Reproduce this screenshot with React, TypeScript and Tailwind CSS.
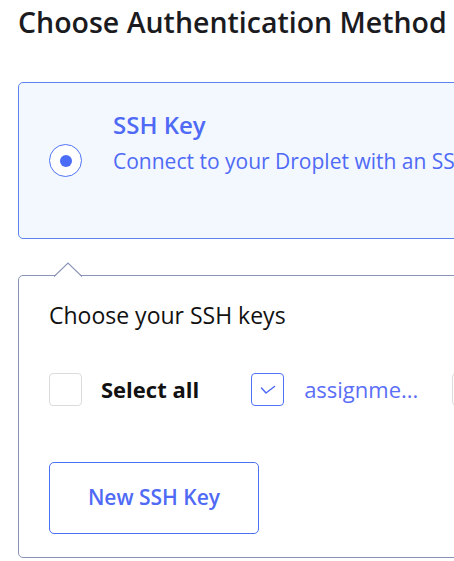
const App = () => {
  return (
    <div className="w-[454px] h-[561px] overflow-hidden bg-white pl-[18px] font-['Open_Sans',sans-serif]">
      <h1 className="pt-[6px] text-[28.5px] leading-[32px] font-semibold text-[#1b1b1f] whitespace-nowrap">
        Choose Authentication Method
      </h1>

      <div className="mt-[44px] w-[600px] h-[157px] rounded-[5px] border border-[#5b83ef] bg-[#f3f8ff] flex items-start pl-[30px] pt-[28px]">
        <div className="mt-[33px] w-[33px] h-[33px] rounded-full border border-[#4f73f5] bg-white flex items-center justify-center">
          <div className="w-[12px] h-[12px] rounded-full bg-[#4a6cf7]" />
        </div>
        <div className="ml-[31px] flex flex-col text-[#4f6af5] whitespace-nowrap">
          <span className="text-[24px] leading-[28px] font-semibold">SSH Key</span>
          <span className="mt-[9px] text-[21px] leading-[26px]">
            Connect to your Droplet with an SSH key pair
          </span>
        </div>
      </div>

      <div className="relative mt-[36px] w-[600px] h-[283px] rounded-[5px] border border-[#8a93b5] bg-white pl-[30px]">
        <svg
          className="absolute -top-[14px] left-[35px]"
          width="28"
          height="15"
          viewBox="0 0 28 15"
        >
          <polygon points="0,15 14,1 28,15" fill="white" />
          <polyline
            points="0,14.5 14,1 28,14.5"
            fill="none"
            stroke="#8a93b5"
            strokeWidth="1.2"
          />
        </svg>

        <p className="pt-[25px] text-[23px] leading-[28px] text-[#111]">Choose your SSH keys</p>

        <div className="mt-[44px] flex items-center whitespace-nowrap">
          <div className="w-[33px] h-[33px] rounded-[4px] border border-[#dcdcdc] bg-white" />
          <span className="ml-[19px] text-[22px] leading-[33px] font-bold text-[#111]">Select all</span>
          <div className="ml-[52px] w-[33px] h-[33px] rounded-[4px] border border-[#4f73f5] bg-white flex items-center justify-center">
            <svg width="16" height="10" viewBox="0 0 16 10">
              <polyline
                points="1.5,3 6,8 14.5,1.5"
                fill="none"
                stroke="#4f6af5"
                strokeWidth="1.5"
                strokeLinecap="round"
                strokeLinejoin="round"
              />
            </svg>
          </div>
          <span className="ml-[20px] text-[22px] leading-[33px] text-[#5b6ef7]">assignme...</span>
          <div className="ml-[34px] w-[33px] h-[33px] rounded-[4px] border border-[#dcdcdc] bg-white" />
        </div>

        <button className="mt-[56px] w-[210px] h-[72px] rounded-[5px] border border-[#4a72f2] bg-white text-[21px] font-semibold text-[#4f6af5]">
          New SSH Key
        </button>
      </div>
    </div>
  );
};

export default App;
